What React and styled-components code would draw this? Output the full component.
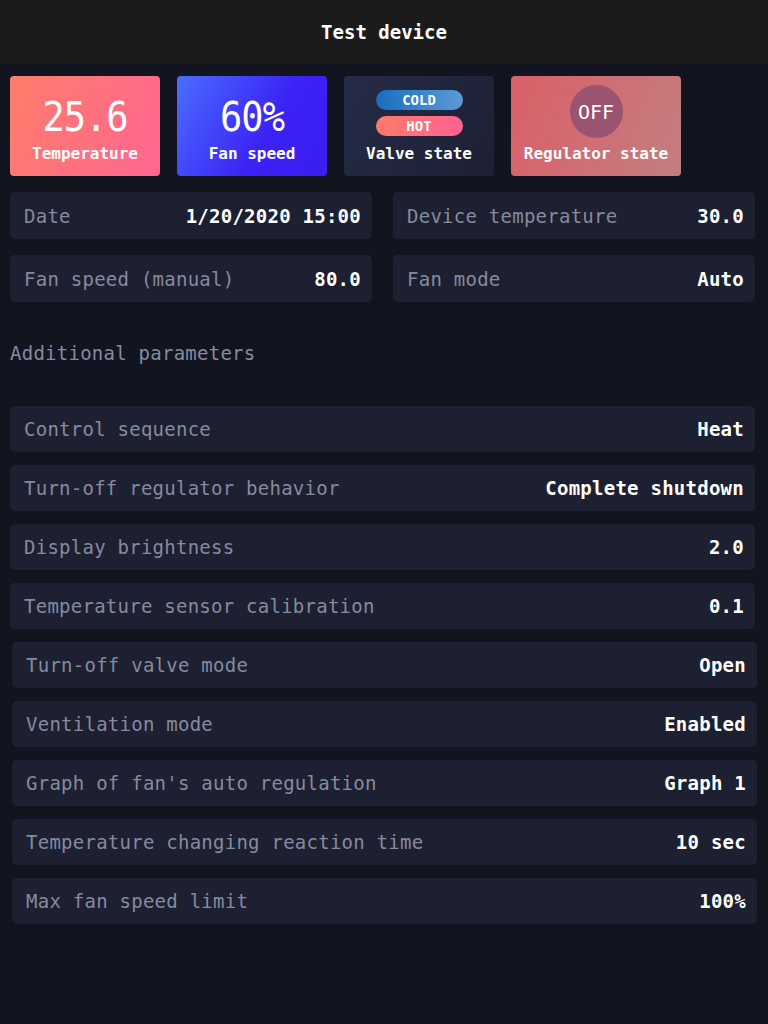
import React from 'react';
import styled, { createGlobalStyle } from 'styled-components';

const GlobalStyle = createGlobalStyle`
  html, body {
    margin: 0;
    padding: 0;
    background: #121520;
    font-family: 'DejaVu Sans Mono', 'Liberation Mono', monospace;
  }
`;

const Page = styled.div`
  width: 768px;
  min-height: 1024px;
  background: #121520;
`;

const Header = styled.header`
  height: 64px;
  background: #1b1b1b;
  display: flex;
  align-items: center;
  justify-content: center;
  color: #ffffff;
  font-size: 19px;
  font-weight: bold;
`;

const Main = styled.main`
  padding: 12px 13px 0 10px;
`;

const Cards = styled.div`
  display: flex;
  gap: 17px;
`;

const Card = styled.div`
  width: ${props => props.$width || 150}px;
  height: 100px;
  border-radius: 4px;
  background: ${props => props.$bg};
  display: flex;
  flex-direction: column;
  align-items: center;
  justify-content: flex-end;
  padding-bottom: 12px;
  box-sizing: border-box;
  color: #ffffff;
`;

const BigValue = styled.div`
  font-size: 37px;
  line-height: 40px;
  margin-bottom: 6px;
  letter-spacing: -1px;
  transform: scaleY(1.1);
`;

const CardLabel = styled.div`
  font-size: 16px;
  line-height: 20px;
  font-weight: bold;
`;

const Pills = styled.div`
  display: flex;
  flex-direction: column;
  gap: 6px;
  margin-bottom: 8px;
`;

const Pill = styled.div`
  width: 87px;
  height: 20px;
  border-radius: 10px;
  background: ${props => props.$bg};
  display: flex;
  align-items: center;
  justify-content: center;
  font-size: 14px;
  font-weight: bold;
  color: #ffffff;
`;

const Circle = styled.div`
  width: 53px;
  height: 53px;
  border-radius: 50%;
  background: #9a5470;
  display: flex;
  align-items: center;
  justify-content: center;
  font-size: 20px;
  margin-bottom: 6px;
`;

const InfoGrid = styled.div`
  margin-top: 16px;
  display: grid;
  grid-template-columns: 362px 362px;
  gap: 16px 21px;
`;

const Row = styled.div`
  height: ${props => props.$height || 46}px;
  margin-left: ${props => props.$shift || 0}px;
  margin-right: ${props => -(props.$shift || 0)}px;
  border-radius: 5px;
  background: #1d2030;
  display: flex;
  align-items: center;
  justify-content: space-between;
  padding: 0 11px 0 14px;
  box-sizing: border-box;
  font-size: 19px;
  letter-spacing: 0.25px;
`;

const Label = styled.span`
  color: #858a9f;
`;

const Value = styled.span`
  color: #ffffff;
  font-weight: bold;
`;

const SectionTitle = styled.div`
  margin-top: 39px;
  line-height: 24px;
  font-size: 19px;
  letter-spacing: 0.25px;
  color: #858a9f;
`;

const List = styled.div`
  margin-top: 41px;
  display: flex;
  flex-direction: column;
  gap: 13px;
`;

const info = [
  ['Date', '1/20/2020 15:00'],
  ['Device temperature', '30.0'],
  ['Fan speed (manual)', '80.0'],
  ['Fan mode', 'Auto'],
];

const params = [
  ['Control sequence', 'Heat', 0],
  ['Turn-off regulator behavior', 'Complete shutdown', 0],
  ['Display brightness', '2.0', 0],
  ['Temperature sensor calibration', '0.1', 0],
  ['Turn-off valve mode', 'Open', 2],
  ['Ventilation mode', 'Enabled', 2],
  ["Graph of fan's auto regulation", 'Graph 1', 2],
  ['Temperature changing reaction time', '10 sec', 2],
  ['Max fan speed limit', '100%', 2],
];

export default function App() {
  return (
    <Page>
      <GlobalStyle />
      <Header>Test device</Header>
      <Main>
        <Cards>
          <Card $bg="linear-gradient(110deg, #ff7d6b 0%, #ff6690 100%)">
            <BigValue>25.6</BigValue>
            <CardLabel>Temperature</CardLabel>
          </Card>
          <Card $bg="linear-gradient(120deg, #4a6dff 0%, #3b22f5 60%, #3a1ef0 100%)">
            <BigValue>60%</BigValue>
            <CardLabel>Fan speed</CardLabel>
          </Card>
          <Card $bg="linear-gradient(120deg, #262c47 0%, #1d2034 100%)">
            <Pills>
              <Pill $bg="linear-gradient(90deg, #1b6cc0 0%, #5b9bd3 100%)">COLD</Pill>
              <Pill $bg="linear-gradient(90deg, #ff7a69 0%, #ff6293 100%)">HOT</Pill>
            </Pills>
            <CardLabel>Valve state</CardLabel>
          </Card>
          <Card $width={170} $bg="linear-gradient(110deg, #db5f68 0%, #c27e80 100%)">
            <Circle>OFF</Circle>
            <CardLabel>Regulator state</CardLabel>
          </Card>
        </Cards>
        <InfoGrid>
          {info.map(([label, value]) => (
            <Row key={label} $height={47}>
              <Label>{label}</Label>
              <Value>{value}</Value>
            </Row>
          ))}
        </InfoGrid>
        <SectionTitle>Additional parameters</SectionTitle>
        <List>
          {params.map(([label, value, shift]) => (
            <Row key={label} $shift={shift}>
              <Label>{label}</Label>
              <Value>{value}</Value>
            </Row>
          ))}
        </List>
      </Main>
    </Page>
  );
}
